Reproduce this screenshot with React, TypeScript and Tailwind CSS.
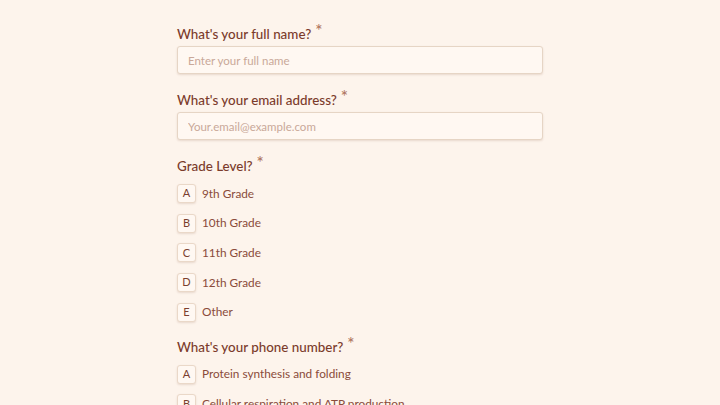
const grades = [
  { key: "A", label: "9th Grade" },
  { key: "B", label: "10th Grade" },
  { key: "C", label: "11th Grade" },
  { key: "D", label: "12th Grade" },
  { key: "E", label: "Other" },
];

const phoneOptions = [
  { key: "A", label: "Protein synthesis and folding" },
  { key: "B", label: "Cellular respiration and ATP production" },
];

function Label({ text }: { text: string }) {
  return (
    <h2 className="flex items-start text-[13.4px] font-medium leading-[20px] text-[#7b3b2b]">
      <span>{text}</span>
      <span className="ml-[4px] -mt-[3px] text-[17px] leading-[20px] text-[#b0765f]">*</span>
    </h2>
  );
}

function Option({ k, label }: { k: string; label: string }) {
  return (
    <div className="flex h-[19px] items-center gap-[6px]">
      <span className="flex h-[19px] w-[19px] items-center justify-center rounded-[3px] border border-[#ead8c8] bg-[#fff8f2] text-[11px] text-[#7b3f2e] shadow-[0_1px_2px_rgba(120,70,40,0.15)]">
        {k}
      </span>
      <span className="text-[11.8px] text-[#8a4b3a]">{label}</span>
    </div>
  );
}

const inputClass =
  "mt-[2px] h-[28px] w-full rounded-[3px] border border-[#e6d5c5] bg-[#fff8f2] px-[10px] text-[11.5px] text-[#7b3f2e] placeholder-[#c9a899] shadow-[0_1px_2px_rgba(120,70,40,0.15)] outline-none";

export default function App() {
  return (
    <main
      className="h-[405px] w-[720px] overflow-hidden bg-[#fdf4ec]"
      style={{ fontFamily: "Lato, 'Open Sans', sans-serif" }}
    >
      <div className="mx-auto flex w-[366px] flex-col pt-[24px]">
        <Label text="What's your full name?" />
        <input className={inputClass} placeholder="Enter your full name" />

        <div className="mt-[16px]">
          <Label text="What's your email address?" />
        </div>
        <input className={inputClass} placeholder="Your.email@example.com" />

        <div className="mt-[16px]">
          <Label text="Grade Level?" />
        </div>
        <div className="mt-[8px] flex flex-col gap-[10.7px]">
          {grades.map((g) => (
            <Option key={g.key} k={g.key} label={g.label} />
          ))}
        </div>

        <div className="mt-[15px]">
          <Label text="What's your phone number?" />
        </div>
        <div className="mt-[8px] flex flex-col gap-[10.7px]">
          {phoneOptions.map((o) => (
            <Option key={o.key} k={o.key} label={o.label} />
          ))}
        </div>
      </div>
    </main>
  );
}
